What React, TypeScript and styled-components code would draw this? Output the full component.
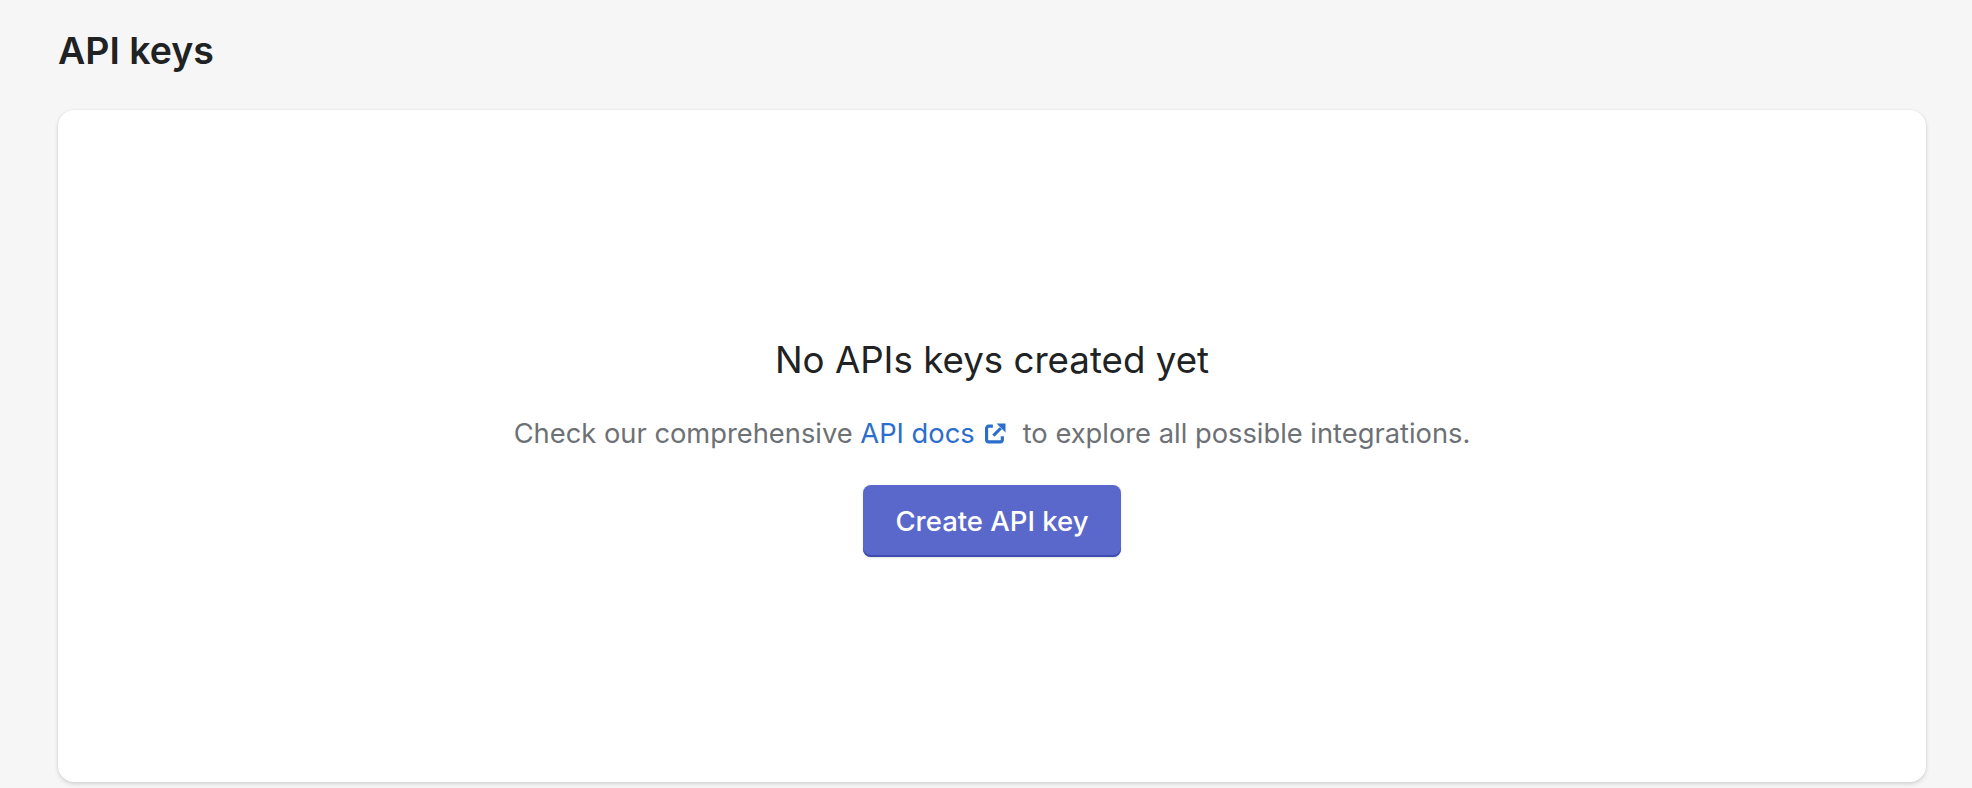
import styled, { createGlobalStyle } from 'styled-components'

const GlobalStyle = createGlobalStyle`
  html, body {
    margin: 0;
    height: 100%;
    background: #f6f6f6;
    font-family: Inter, "Liberation Sans", sans-serif;
    overflow: hidden;
  }
`

const ExternalLinkIcon = () => (
  <LinkIcon viewBox="0 0 20 20" fill="none" stroke="currentColor" strokeWidth="3">
    <path d="M7.5 3H3.5a2 2 0 0 0-2 2v11a2 2 0 0 0 2 2h11a2 2 0 0 0 2-2v-3.5" />
    <path d="M8 12 15 5" />
    <path d="M11 0.5h8.5V9Z" stroke="none" fill="currentColor" />
  </LinkIcon>
)

export default function App() {
  return (
    <Page>
      <GlobalStyle />
      <PageTitle>API keys</PageTitle>
      <Card>
        <EmptyTitle>No APIs keys created yet</EmptyTitle>
        <EmptyText>
          Check our comprehensive{' '}
          <DocsLink href="#">
            API docs
            <ExternalLinkIcon />
          </DocsLink>
          to explore all possible integrations.
        </EmptyText>
        <PrimaryButton>Create API key</PrimaryButton>
      </Card>
    </Page>
  )
}

const Page = styled.div`
  height: 788px;
  box-sizing: border-box;
  padding: 28px 46px 6px 58px;
  display: flex;
  flex-direction: column;
  gap: 28px;
`

const PageTitle = styled.h1`
  margin: 0;
  height: 54px;
  font-size: 37.5px;
  line-height: 46px;
  font-weight: 600;
  color: #202223;
`

const Card = styled.section`
  flex: 1;
  background: #fff;
  border-radius: 16px;
  box-shadow: 0 0 2px rgba(23, 24, 24, 0.08), 0 2px 4px rgba(23, 24, 24, 0.15);
  display: flex;
  flex-direction: column;
  align-items: center;
  padding-top: 226px;
  box-sizing: border-box;
`

const EmptyTitle = styled.h2`
  margin: 0;
  font-size: 36.7px;
  line-height: 48px;
  font-weight: 400;
  color: #202223;
`

const EmptyText = styled.p`
  margin: 30px 0 0;
  font-size: 27.3px;
  line-height: 39px;
  color: #6d7175;
`

const DocsLink = styled.a`
  color: #2c6ecb;
  text-decoration: none;
  margin-right: 17px;
`

const LinkIcon = styled.svg`
  width: 21px;
  height: 21px;
  margin-left: 10px;
  vertical-align: -1px;
`

const PrimaryButton = styled.button`
  margin-top: 32px;
  width: 258px;
  height: 72px;
  border: none;
  border-radius: 8px;
  background: #5a68cc;
  box-shadow: inset 0 -2px 0 #3f4eae, 0 1px 2px rgba(0, 0, 0, 0.12);
  color: #fff;
  font-family: inherit;
  font-size: 27.5px;
  font-weight: 500;
`
